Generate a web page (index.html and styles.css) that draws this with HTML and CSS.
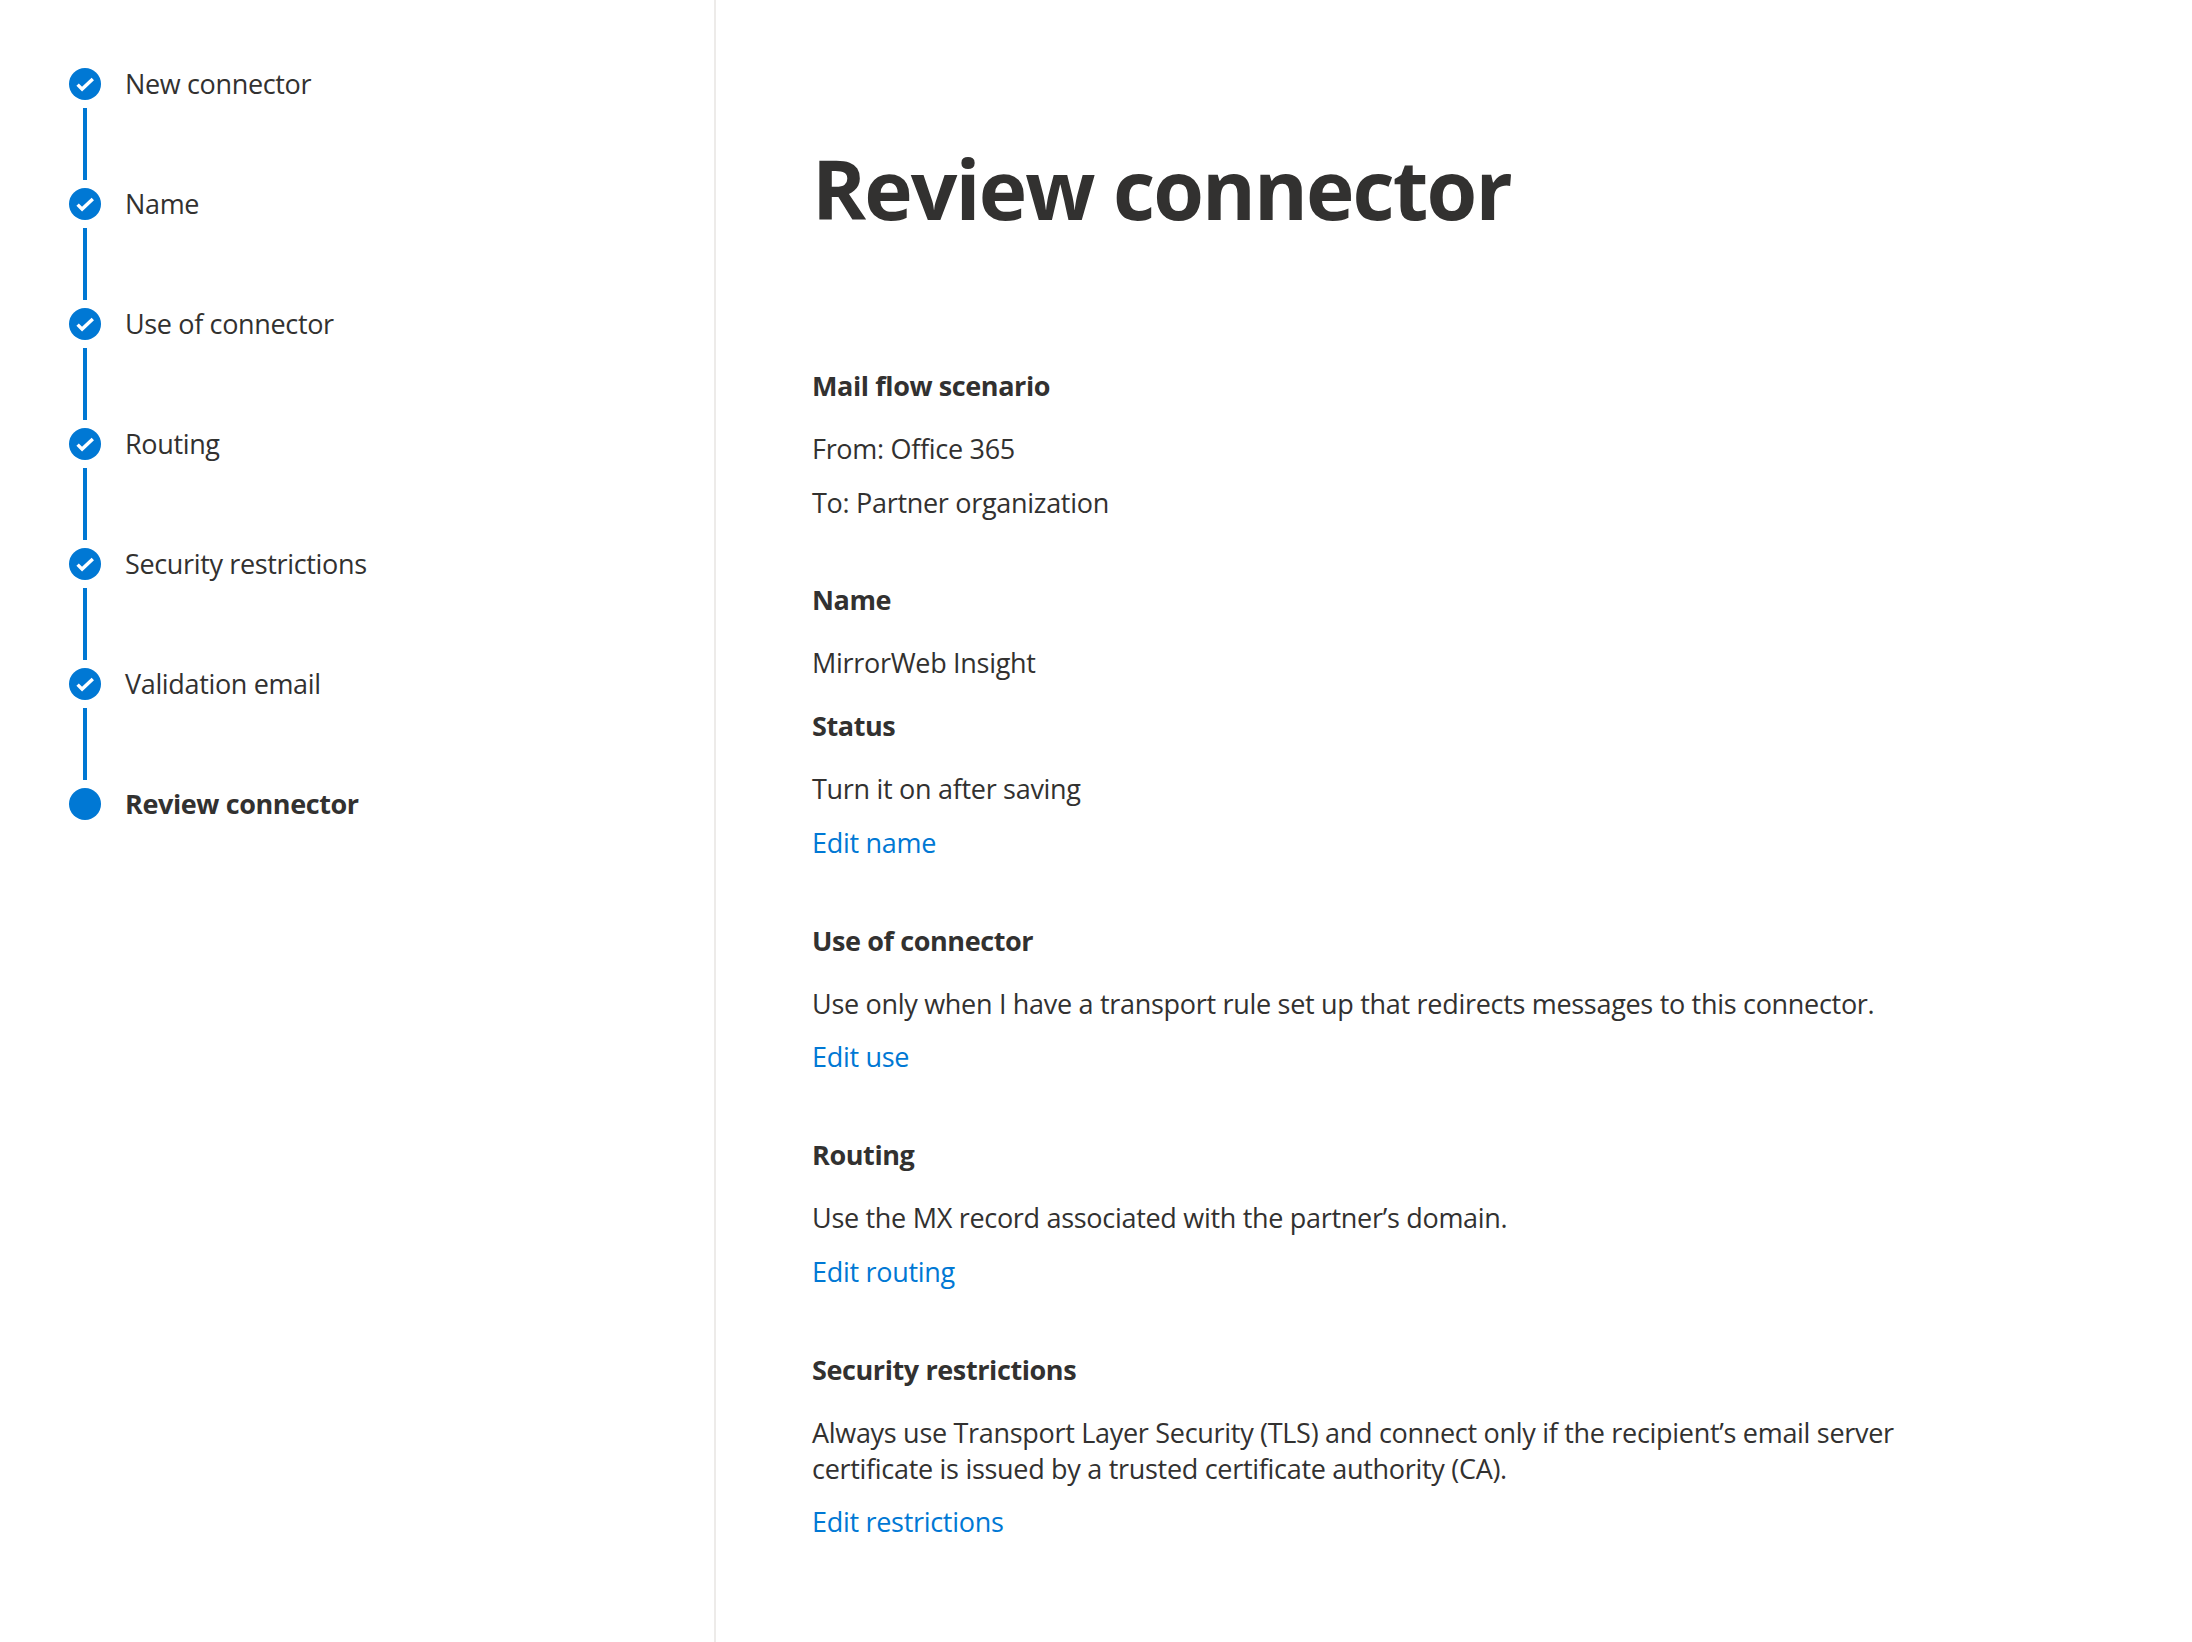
FILE: index.html
```html
<!DOCTYPE html>
<html lang="en">
<head>
<meta charset="utf-8">
<title>Review connector</title>
<link rel="stylesheet" href="styles.css">
</head>
<body>
<div class="page">
  <nav class="steps">
    <div class="step"><span class="dot"><svg class="check" viewBox="0 0 32 32"><path d="M8.6 16.6l4.5 4.5L23.8 11"/></svg></span><span class="label">New connector</span></div>
    <div class="rail"></div>
    <div class="step"><span class="dot"><svg class="check" viewBox="0 0 32 32"><path d="M8.6 16.6l4.5 4.5L23.8 11"/></svg></span><span class="label">Name</span></div>
    <div class="rail"></div>
    <div class="step"><span class="dot"><svg class="check" viewBox="0 0 32 32"><path d="M8.6 16.6l4.5 4.5L23.8 11"/></svg></span><span class="label">Use of connector</span></div>
    <div class="rail"></div>
    <div class="step"><span class="dot"><svg class="check" viewBox="0 0 32 32"><path d="M8.6 16.6l4.5 4.5L23.8 11"/></svg></span><span class="label">Routing</span></div>
    <div class="rail"></div>
    <div class="step"><span class="dot"><svg class="check" viewBox="0 0 32 32"><path d="M8.6 16.6l4.5 4.5L23.8 11"/></svg></span><span class="label">Security restrictions</span></div>
    <div class="rail"></div>
    <div class="step"><span class="dot"><svg class="check" viewBox="0 0 32 32"><path d="M8.6 16.6l4.5 4.5L23.8 11"/></svg></span><span class="label">Validation email</span></div>
    <div class="rail"></div>
    <div class="step"><span class="dot"></span><span class="label current">Review connector</span></div>
  </nav>
  <main class="content">
    <h1 class="title">Review connector</h1>
    <section class="group first">
      <h2 class="head">Mail flow scenario</h2>
      <p class="text">From: Office 365</p>
      <p class="text next">To: Partner organization</p>
    </section>
    <section class="group">
      <h2 class="head">Name</h2>
      <p class="text">MirrorWeb Insight</p>
      <h2 class="head sub">Status</h2>
      <p class="text">Turn it on after saving</p>
      <a class="edit" href="#">Edit name</a>
    </section>
    <section class="group">
      <h2 class="head">Use of connector</h2>
      <p class="text">Use only when I have a transport rule set up that redirects messages to this connector.</p>
      <a class="edit" href="#">Edit use</a>
    </section>
    <section class="group">
      <h2 class="head">Routing</h2>
      <p class="text">Use the MX record associated with the partner’s domain.</p>
      <a class="edit" href="#">Edit routing</a>
    </section>
    <section class="group">
      <h2 class="head">Security restrictions</h2>
      <p class="text">Always use Transport Layer Security (TLS) and connect only if the recipient’s email server certificate is issued by a trusted certificate authority (CA).</p>
      <a class="edit" href="#">Edit restrictions</a>
    </section>
  </main>
</div>
</body>
</html>
```
FILE: styles.css
```css
* { box-sizing: border-box; }
html, body { margin: 0; height: 100%; background: #fff; }
body { font-family: "Open Sans", "Noto Sans", sans-serif; color: #323130; overflow: hidden; }
.page { display: flex; height: 1642px; }
.steps { width: 716px; flex: none; border-right: 2px solid #edebe9; padding: 68px 0 0 69px; }
.step { display: flex; align-items: center; height: 32px; gap: 24px; }
.dot { width: 32px; height: 32px; border-radius: 50%; background: #0078d4; flex: none; }
.check { display: block; width: 32px; height: 32px; fill: none; stroke: #fff; stroke-width: 3.4; }
.rail { width: 4px; height: 72px; margin: 8px 0 8px 14px; background: #0078d4; }
.label { font-size: 27px; letter-spacing: -0.35px; line-height: 36px; }
.current { font-weight: 700; letter-spacing: -0.4px; }
.content { flex: 1; padding: 137px 0 0 96px; }
.title { margin: 0 0 129px; font-size: 82px; line-height: 102px; font-weight: 700; letter-spacing: -1.9px; }
.group { margin-bottom: 62px; width: 1100px; }
.first { margin-bottom: 61px; }
.head { margin: 0 0 27px; font-size: 27px; line-height: 36px; font-weight: 700; letter-spacing: -0.4px; }
.sub { margin-top: 27px; }
.text { margin: 0; font-size: 27px; line-height: 36px; letter-spacing: -0.3px; }
.next { margin-top: 18px; }
.edit { display: block; margin-top: 17.5px; font-size: 27px; line-height: 36px; letter-spacing: -0.3px; color: #0078d4; text-decoration: none; }
```
